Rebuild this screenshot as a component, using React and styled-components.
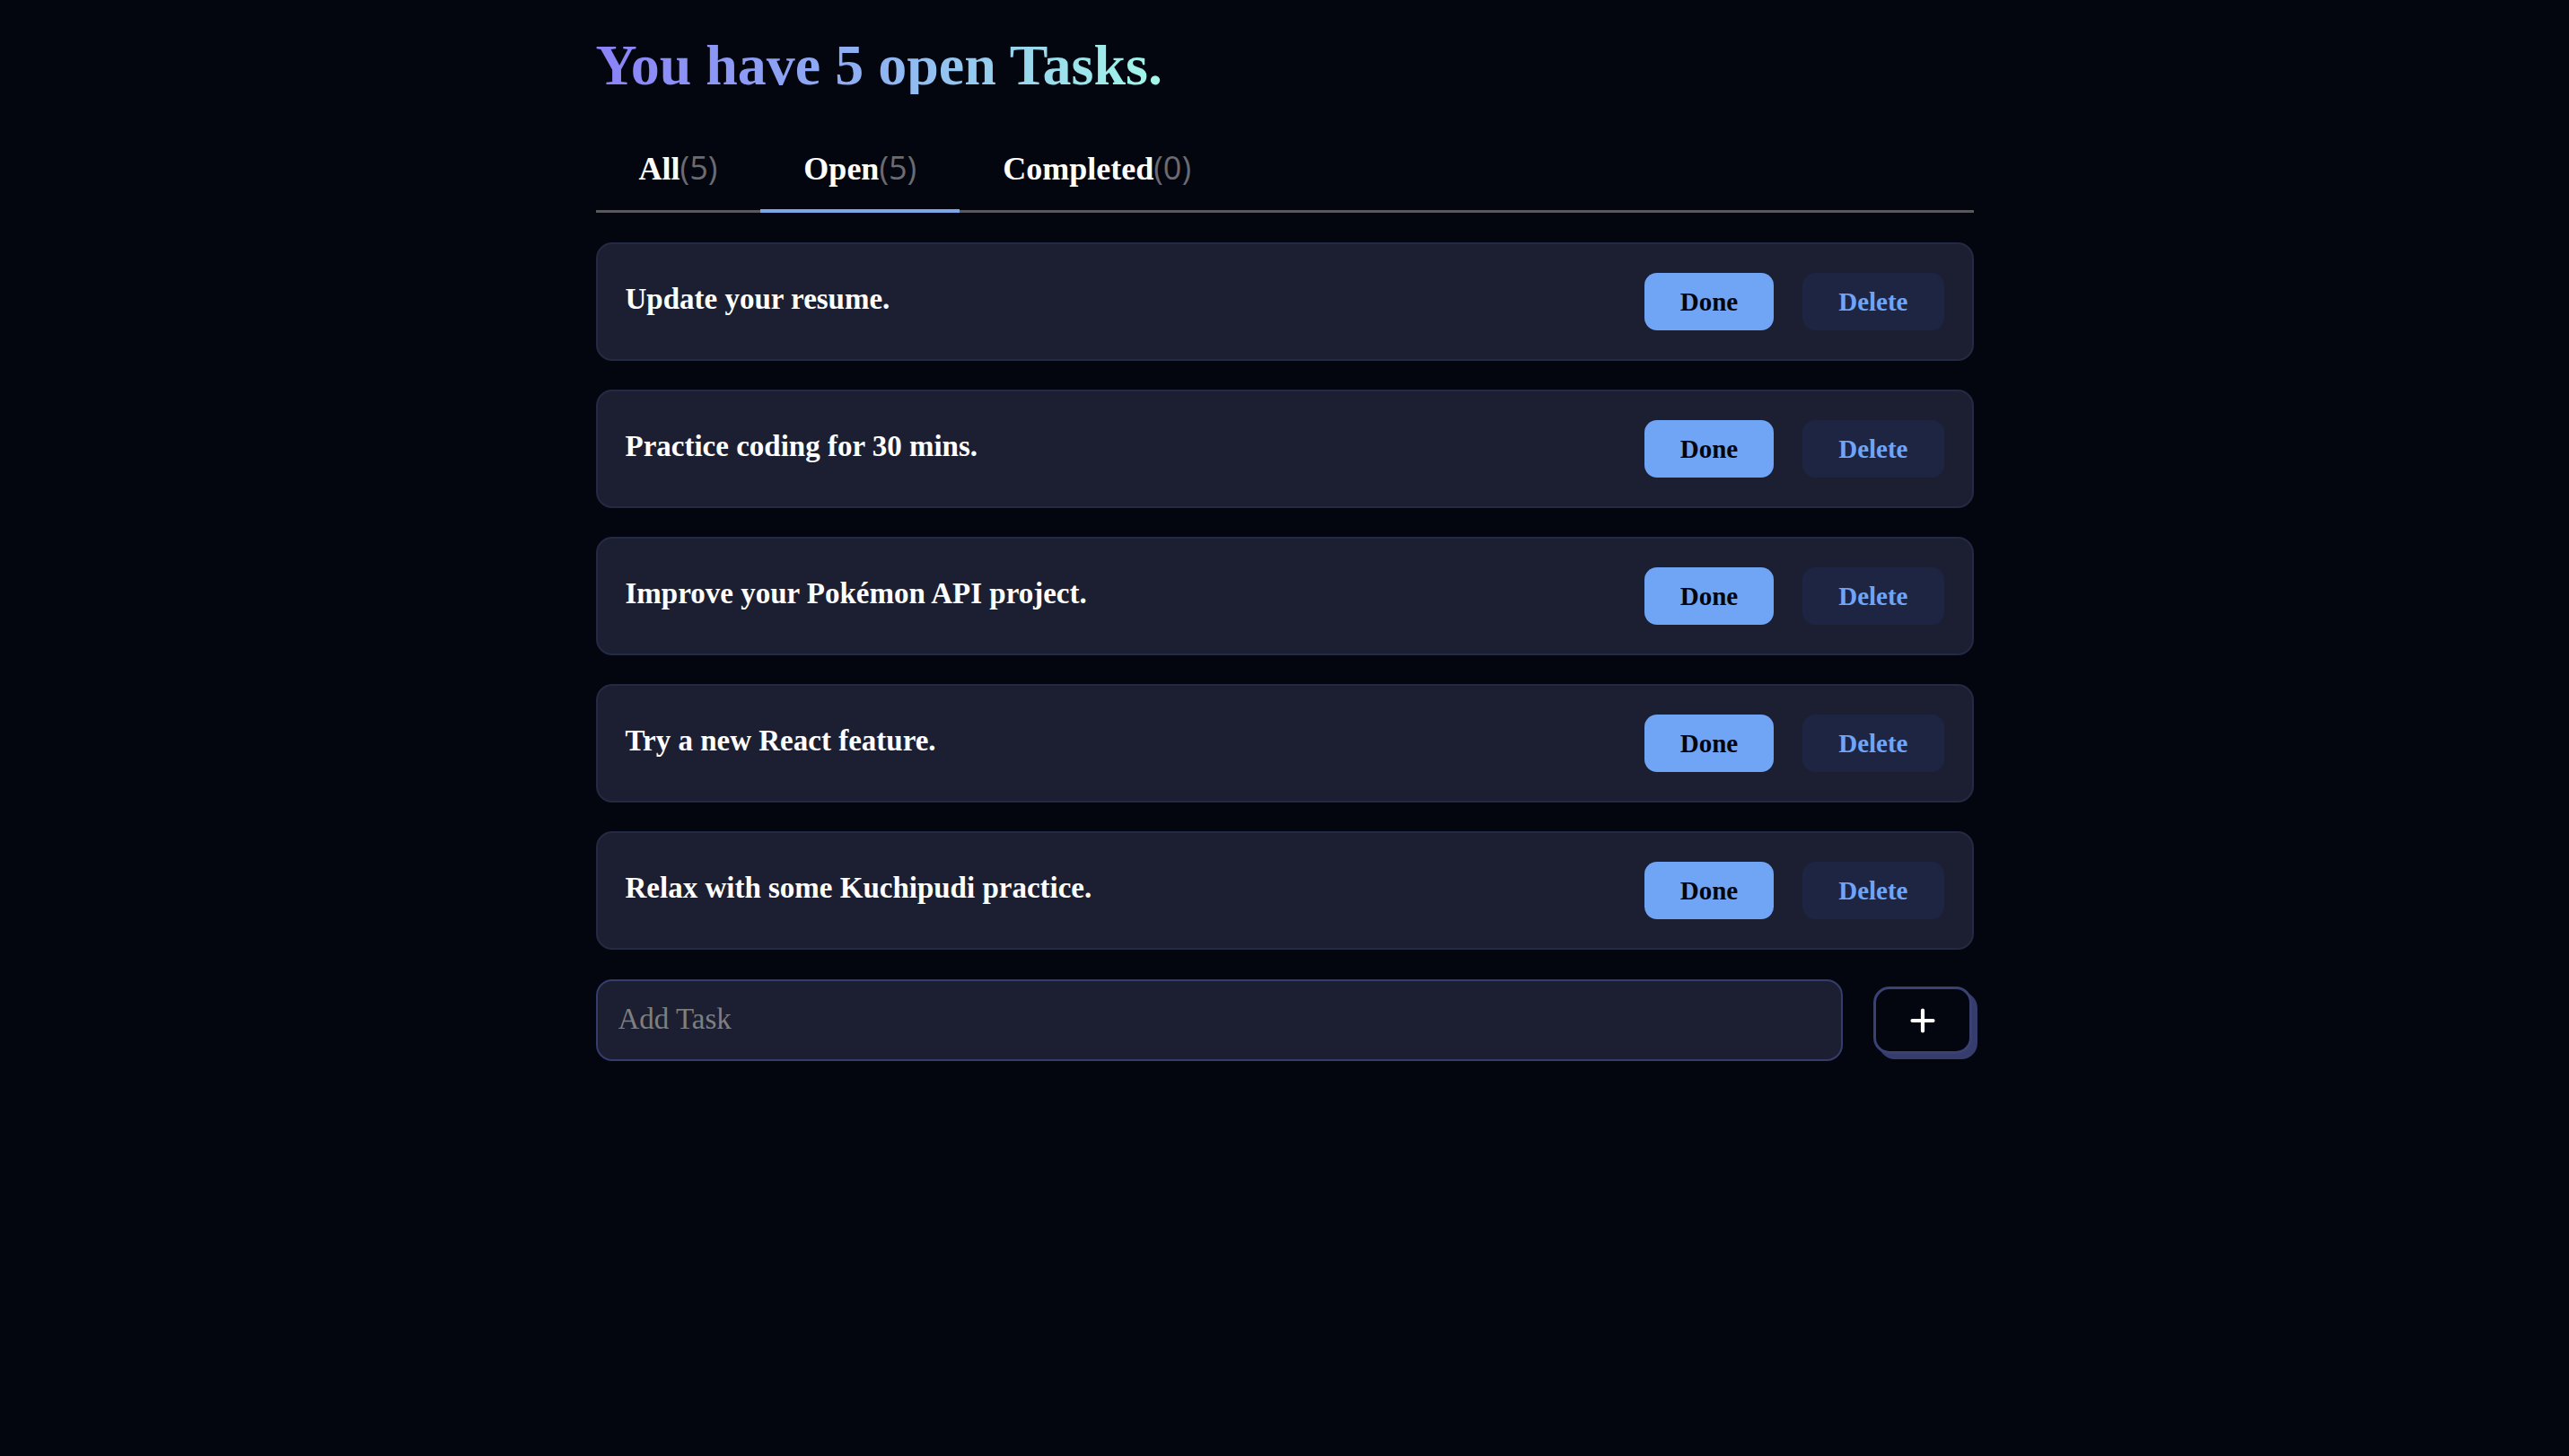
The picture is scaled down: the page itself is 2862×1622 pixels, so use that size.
import React, { useState } from "react";
import styled, { createGlobalStyle } from "styled-components";

const GlobalStyle = createGlobalStyle`
  html, body {
    margin: 0;
    padding: 0;
    background: #03060f;
  }
  body {
    font-family: "Liberation Serif", "Times New Roman", serif;
    color: #ffffff;
  }
  * { box-sizing: border-box; }
`;

const Page = styled.main`
  width: 1535px;
  margin: 0 auto;
  padding-top: 41px;
  padding-bottom: 80px;
`;

const Title = styled.h1`
  margin: 0 0 51px;
  font-size: 64px;
  line-height: 1;
  font-weight: 700;
  display: inline-block;
  background: linear-gradient(90deg, #8a82f8 0%, #8fb3f2 50%, #a2f8e8 100%);
  -webkit-background-clip: text;
  background-clip: text;
  color: transparent;
`;

const TabBar = styled.nav`
  display: flex;
  border-bottom: 3px solid #58585d;
`;

const Tab = styled.button`
  appearance: none;
  background: none;
  border: none;
  border-bottom: 4px solid ${(p) => (p.$active ? "#7ba6ea" : "transparent")};
  margin-bottom: -3px;
  padding: 13px 48px 27px;
  font-family: "Liberation Serif", "Times New Roman", serif;
  font-size: 36px;
  line-height: 1;
  font-weight: 700;
  color: #ffffff;
  cursor: pointer;
`;

const Count = styled.span`
  font-family: "Open Sans", "Liberation Sans", sans-serif;
  font-weight: 400;
  color: #6b6b72;
`;

const List = styled.ul`
  list-style: none;
  margin: 33px 0 0;
  padding: 0;
  display: flex;
  flex-direction: column;
  gap: 32px;
`;

const Row = styled.li`
  height: 132px;
  display: flex;
  align-items: center;
  gap: 32px;
  padding: 0 31px;
  background: #1c1f31;
  border: 2px solid #252a44;
  border-radius: 18px;
`;

const TaskText = styled.span`
  flex: 1;
  font-size: 33px;
  line-height: 1;
  font-weight: 700;
  color: #ffffff;
  margin-bottom: 5px;
`;

const ActionButton = styled.button`
  appearance: none;
  border: none;
  height: 64px;
  padding: 0 40px;
  border-radius: 14px;
  font-family: "Liberation Serif", "Times New Roman", serif;
  font-size: 29px;
  line-height: 1;
  font-weight: 700;
  cursor: pointer;
  background: ${(p) => (p.$variant === "primary" ? "#70a4f5" : "#1e2542")};
  color: ${(p) => (p.$variant === "primary" ? "#03060f" : "#70a4f5")};
`;

const AddForm = styled.form`
  display: flex;
  align-items: center;
  gap: 34px;
  margin-top: 33px;
`;

const TaskInput = styled.input`
  flex: 1;
  height: 91px;
  padding: 0 23px 2px;
  background: #1c1f31;
  border: 2px solid #363d6d;
  border-radius: 18px;
  font-family: "Liberation Serif", "Times New Roman", serif;
  font-size: 33px;
  color: #ffffff;
  outline: none;
  &::placeholder {
    color: #7f7f82;
  }
`;

const AddButton = styled.button`
  appearance: none;
  width: 110px;
  height: 75px;
  margin-right: 2px;
  display: flex;
  align-items: center;
  justify-content: center;
  background: #03060f;
  border: 3px solid #3a4173;
  border-radius: 18px;
  box-shadow: 6px 6px 0 #363d6d;
  cursor: pointer;
  padding: 0;
`;

const PlusIcon = () => (
  <svg width="28" height="28" viewBox="0 0 28 28" fill="none">
    <path
      d="M14 2.5V25.5M2.5 14H25.5"
      stroke="#ffffff"
      strokeWidth="4.2"
      strokeLinecap="round"
    />
  </svg>
);

const tasks = [
  "Update your resume.",
  "Practice coding for 30 mins.",
  "Improve your Pokémon API project.",
  "Try a new React feature.",
  "Relax with some Kuchipudi practice.",
];

export default function App() {
  const [tab, setTab] = useState("Open");
  const tabs = [
    { name: "All", count: 5 },
    { name: "Open", count: 5 },
    { name: "Completed", count: 0 },
  ];
  return (
    <>
      <GlobalStyle />
      <Page>
        <Title>You have 5 open Tasks.</Title>
        <TabBar>
          {tabs.map((t) => (
            <Tab
              key={t.name}
              $active={tab === t.name}
              onClick={() => setTab(t.name)}
            >
              {t.name}
              <Count>({t.count})</Count>
            </Tab>
          ))}
        </TabBar>
        <List>
          {tasks.map((t) => (
            <Row key={t}>
              <TaskText>{t}</TaskText>
              <ActionButton $variant="primary">Done</ActionButton>
              <ActionButton $variant="secondary">Delete</ActionButton>
            </Row>
          ))}
        </List>
        <AddForm onSubmit={(e) => e.preventDefault()}>
          <TaskInput placeholder="Add Task" />
          <AddButton type="submit" aria-label="Add task">
            <PlusIcon />
          </AddButton>
        </AddForm>
      </Page>
    </>
  );
}
